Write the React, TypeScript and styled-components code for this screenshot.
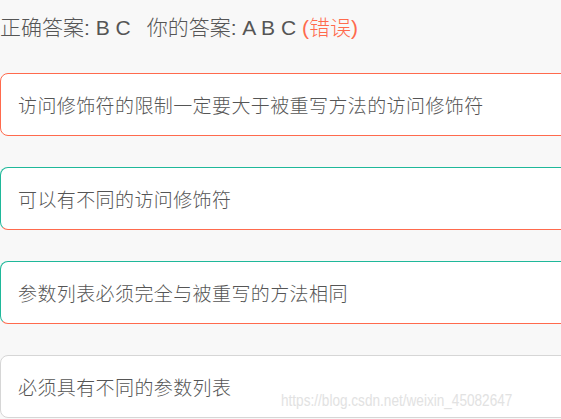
import React from 'react'
import styled, { createGlobalStyle } from 'styled-components'

const GlobalStyle = createGlobalStyle`
  html, body {
    margin: 0;
    padding: 0;
    background: #f8f8f8;
    overflow: hidden;
  }
  body {
    font-family: "Liberation Sans", "Noto Sans CJK SC", sans-serif;
  }
`

type Tone = 'wrong' | 'half' | 'plain'

const options: { text: string; tone: Tone }[] = [
    { text: '访问修饰符的限制一定要大于被重写方法的访问修饰符', tone: 'wrong' },
    { text: '可以有不同的访问修饰符', tone: 'half' },
    { text: '参数列表必须完全与被重写的方法相同', tone: 'half' },
    { text: '必须具有不同的参数列表', tone: 'plain' },
]

const App = () => {
    return (
        <Page>
            <GlobalStyle />
            <Result>
                正确答案: B C<Gap />你的答案: A B C <Wrong>(错误)</Wrong>
            </Result>
            <List>
                {options.map((o) => (
                    <Card key={o.text} tone={o.tone}>
                        {o.text}
                    </Card>
                ))}
            </List>
            <Watermark>https://blog.csdn.net/weixin_45082647</Watermark>
        </Page>
    )
}
export default App

const Page = styled.div`
  position: relative;
  width: 561px;
  height: 419px;
  overflow: hidden;
  background: #f8f8f8;
`

const Result = styled.div`
  padding: 17px 0 0 0;
  height: 39px;
  box-sizing: border-box;
  line-height: 22px;
  font-size: 21px;
  font-weight: 300;
  color: #555;
  font-family: "Liberation Sans", "Noto Sans CJK SC", sans-serif;
  white-space: nowrap;
`

const Gap = styled.span`
  display: inline-block;
  width: 16px;
`

const Wrong = styled.span`
  color: #ff6a4d;
`

const List = styled.div`
  display: flex;
  flex-direction: column;
  gap: 31px;
  margin-top: 34px;
`

const Card = styled.div<{ tone: Tone }>`
  box-sizing: border-box;
  width: 620px;
  height: 63px;
  display: flex;
  align-items: center;
  padding-left: 17px;
  padding-bottom: 1px;
  background: #fff;
  border: 1px solid;
  border-radius: 8px;
  border-color: ${(p) =>
        p.tone === 'wrong'
            ? '#ff6a4d'
            : p.tone === 'half'
              ? '#1fb89a #1fb89a #ff6a4d #1fb89a'
              : '#d6d6d6'};
  font-family: "Noto Sans CJK SC", sans-serif;
  font-weight: 300;
  font-size: 19px;
  letter-spacing: 0.4px;
  color: #555;
  white-space: nowrap;
`

const Watermark = styled.div`
  position: absolute;
  left: 281px;
  top: 391px;
  font-family: "Liberation Sans", sans-serif;
  font-size: 17px;
  color: #e2e2e2;
  white-space: nowrap;
  transform: scaleX(0.8);
  transform-origin: left center;
`
